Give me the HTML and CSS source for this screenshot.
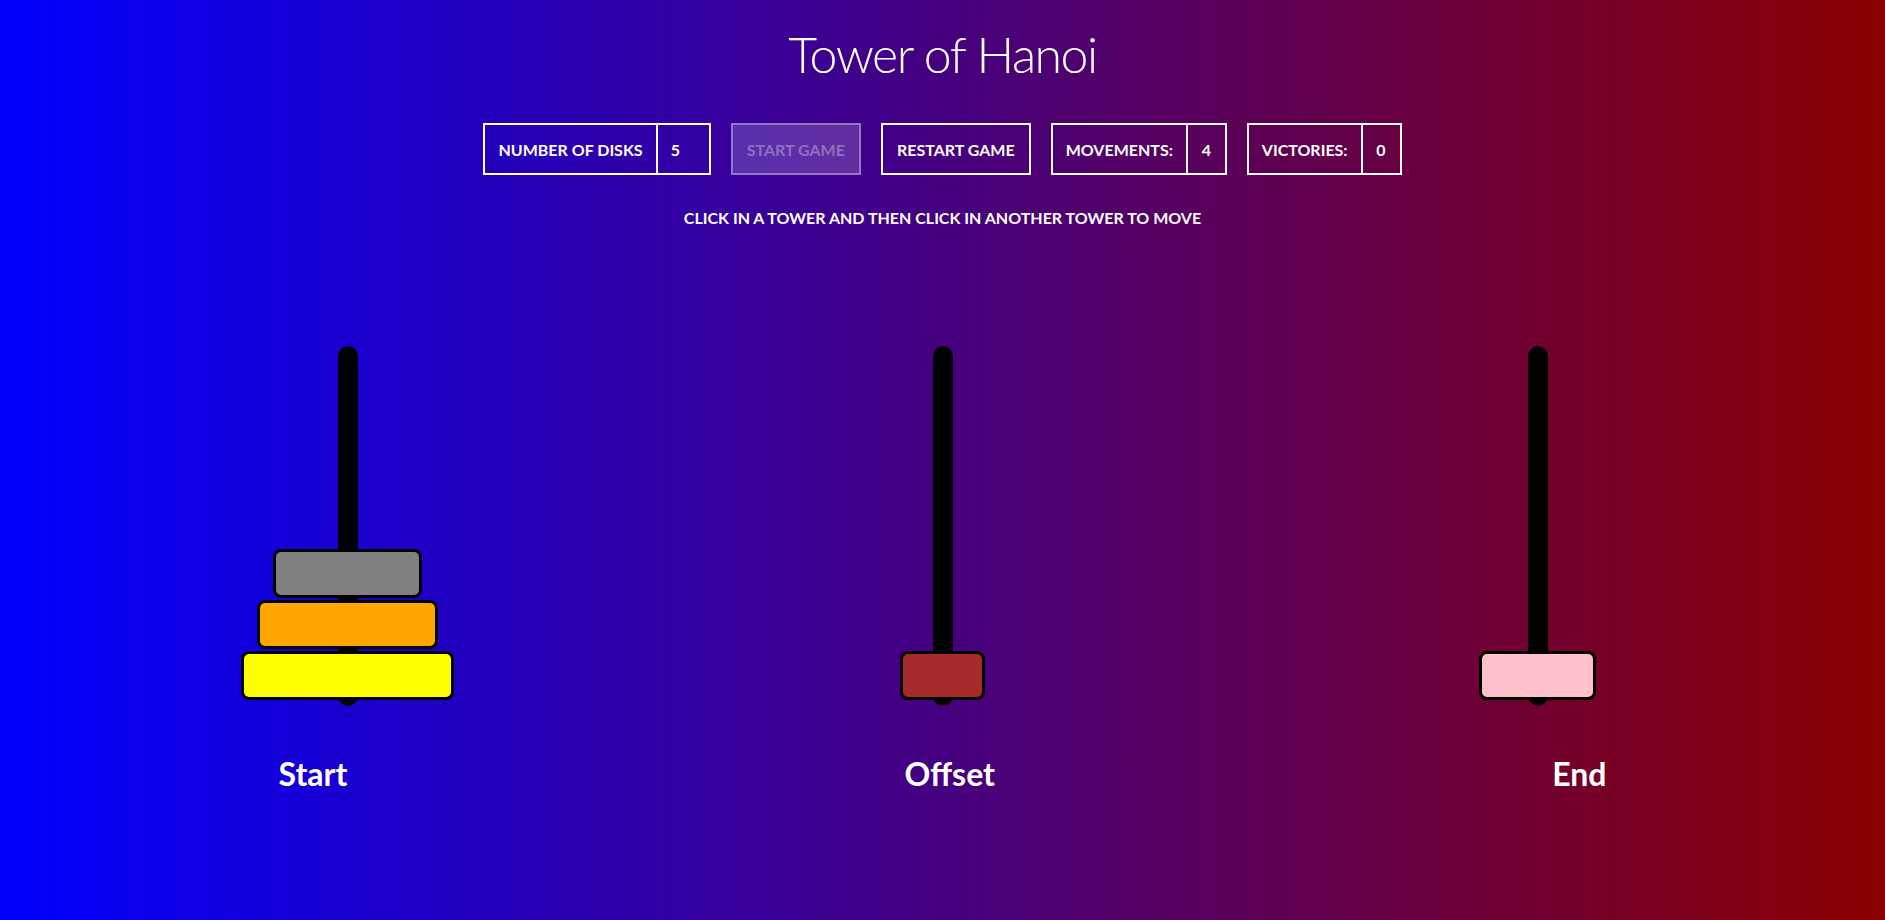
FILE: index.html
```html
<!DOCTYPE html>
<html lang="en">
<head>
<meta charset="utf-8">
<title>Tower of Hanoi</title>
<link rel="stylesheet" href="styles.css">
</head>
<body>
<main class="page">
  <h1 class="title">Tower of Hanoi</h1>
  <div class="controls">
    <div class="box">
      <span class="box-label">Number of disks</span>
      <span class="box-value box-value-input">5</span>
    </div>
    <button class="btn btn-disabled" disabled>Start game</button>
    <button class="btn">Restart game</button>
    <div class="box">
      <span class="box-label">Movements:</span>
      <span class="box-value">4</span>
    </div>
    <div class="box">
      <span class="box-label">Victories:</span>
      <span class="box-value">0</span>
    </div>
  </div>
  <p class="hint">Click in a tower and then click in another tower to move</p>
  <section class="towers">
    <div class="tower">
      <div class="pole"></div>
      <div class="stack">
        <div class="disk disk-3"></div>
        <div class="disk disk-4"></div>
        <div class="disk disk-5"></div>
      </div>
    </div>
    <div class="tower">
      <div class="pole"></div>
      <div class="stack">
        <div class="disk disk-1"></div>
      </div>
    </div>
    <div class="tower">
      <div class="pole"></div>
      <div class="stack">
        <div class="disk disk-2"></div>
      </div>
    </div>
  </section>
  <div class="labels">
    <span class="label">Start</span>
    <span class="label">Offset</span>
    <span class="label">End</span>
  </div>
</main>
</body>
</html>
```

FILE: styles.css
```css
* {
  box-sizing: border-box;
}

html, body {
  margin: 0;
  padding: 0;
  height: 100%;
}

body {
  background: linear-gradient(to right, #0000ff 0%, #8b0000 100%);
  color: #ffffff;
  font-family: Lato, "Noto Sans", "Liberation Sans", sans-serif;
  overflow: hidden;
}

.page {
  display: flex;
  flex-direction: column;
  align-items: center;
  padding-top: 24px;
}

.title {
  margin: 0;
  font-size: 50px;
  line-height: 60px;
  font-weight: 300;
  letter-spacing: -1.5px;
}

.controls {
  display: flex;
  gap: 20px;
  margin-top: 39px;
}

.box,
.btn {
  display: flex;
  align-items: center;
  height: 52px;
  border: 2px solid #ffffff;
  background: transparent;
  color: #ffffff;
  font-family: Lato, "Noto Sans", "Liberation Sans", sans-serif;
  font-size: 16px;
  font-weight: 700;
  text-transform: uppercase;
  margin: 0;
}

.btn {
  padding: 0 14px;
}

.btn-disabled {
  background: rgba(255, 255, 255, 0.18);
  border-color: rgba(255, 255, 255, 0.35);
  color: rgba(255, 255, 255, 0.32);
}

.box-label {
  padding: 0 13px;
  height: 100%;
  display: flex;
  align-items: center;
}

.box-value {
  height: 100%;
  display: flex;
  align-items: center;
  justify-content: center;
  width: 39px;
  border-left: 2px solid #ffffff;
}

.box-value-input {
  width: 53px;
  justify-content: flex-start;
  padding-left: 13px;
}

.hint {
  margin: 33px 0 0;
  font-size: 16px;
  font-weight: 700;
  text-transform: uppercase;
  line-height: 19px;
}

.towers {
  align-self: stretch;
  display: flex;
  justify-content: space-evenly;
  margin-top: 119px;
}

.tower {
  width: 495px;
  height: 360px;
  display: grid;
}

.pole,
.stack {
  grid-area: 1 / 1;
  justify-self: center;
}

.pole {
  width: 20px;
  height: 360px;
  background: #000000;
  border-radius: 10px;
}

.stack {
  align-self: end;
  display: flex;
  flex-direction: column;
  align-items: center;
  gap: 2px;
  margin-bottom: 6px;
}

.disk {
  height: 49px;
  border: 3px solid #000000;
  border-radius: 8px;
}

.disk-1 { width: 85px;  background: #a52a2a; }
.disk-2 { width: 117px; background: #ffc0cb; }
.disk-3 { width: 149px; background: #808080; }
.disk-4 { width: 181px; background: #ffa500; }
.disk-5 { width: 213px; background: #ffff00; }

.labels {
  align-self: stretch;
  display: flex;
  justify-content: space-around;
  margin-top: 49px;
}

.label {
  font-size: 32px;
  font-weight: 700;
  line-height: 38px;
}
```
